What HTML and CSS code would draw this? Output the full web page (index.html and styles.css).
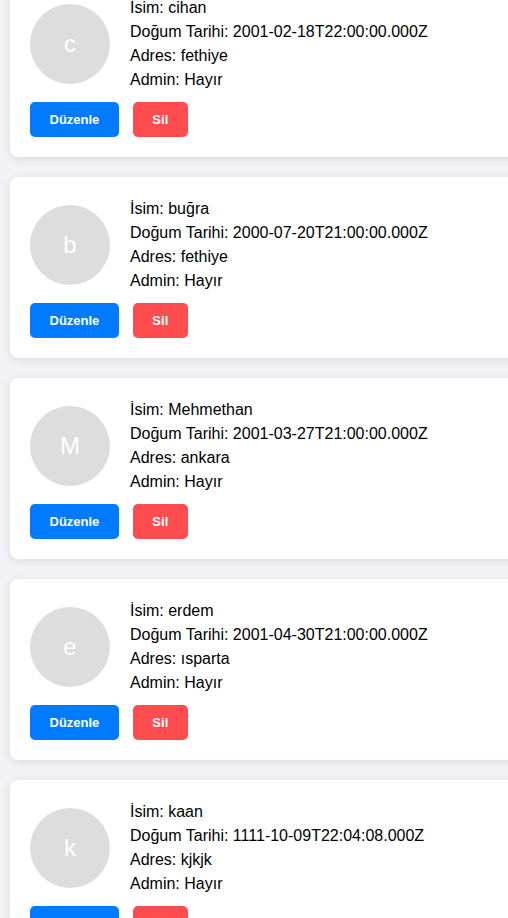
FILE: index.html
```html
<!DOCTYPE html>
<html lang="tr">
<head>
<meta charset="utf-8">
<title>Kullanıcılar</title>
<link rel="stylesheet" href="styles.css">
</head>
<body>
<div class="list">
  <div class="card">
    <div class="info">
      <div class="avatar">c</div>
      <div class="details">
        <div>İsim: cihan</div>
        <div>Doğum Tarihi: 2001-02-18T22:00:00.000Z</div>
        <div>Adres: fethiye</div>
        <div>Admin: Hayır</div>
      </div>
    </div>
    <div class="actions">
      <button class="btn edit">Düzenle</button>
      <button class="btn del">Sil</button>
    </div>
  </div>
  <div class="card">
    <div class="info">
      <div class="avatar">b</div>
      <div class="details">
        <div>İsim: buğra</div>
        <div>Doğum Tarihi: 2000-07-20T21:00:00.000Z</div>
        <div>Adres: fethiye</div>
        <div>Admin: Hayır</div>
      </div>
    </div>
    <div class="actions">
      <button class="btn edit">Düzenle</button>
      <button class="btn del">Sil</button>
    </div>
  </div>
  <div class="card">
    <div class="info">
      <div class="avatar">M</div>
      <div class="details">
        <div>İsim: Mehmethan</div>
        <div>Doğum Tarihi: 2001-03-27T21:00:00.000Z</div>
        <div>Adres: ankara</div>
        <div>Admin: Hayır</div>
      </div>
    </div>
    <div class="actions">
      <button class="btn edit">Düzenle</button>
      <button class="btn del">Sil</button>
    </div>
  </div>
  <div class="card">
    <div class="info">
      <div class="avatar">e</div>
      <div class="details">
        <div>İsim: erdem</div>
        <div>Doğum Tarihi: 2001-04-30T21:00:00.000Z</div>
        <div>Adres: ısparta</div>
        <div>Admin: Hayır</div>
      </div>
    </div>
    <div class="actions">
      <button class="btn edit">Düzenle</button>
      <button class="btn del">Sil</button>
    </div>
  </div>
  <div class="card">
    <div class="info">
      <div class="avatar">k</div>
      <div class="details">
        <div>İsim: kaan</div>
        <div>Doğum Tarihi: 1111-10-09T22:04:08.000Z</div>
        <div>Adres: kjkjk</div>
        <div>Admin: Hayır</div>
      </div>
    </div>
    <div class="actions">
      <button class="btn edit">Düzenle</button>
      <button class="btn del">Sil</button>
    </div>
  </div>
</div>
</body>
</html>
```

FILE: styles.css
```css
html, body {
  margin: 0;
  padding: 0;
  overflow: hidden;
  background: #f2f2f7;
}
body {
  font-family: "Liberation Sans", Arial, sans-serif;
  font-size: 16px;
  color: #000;
}
.list {
  margin-top: -24px;
  padding-left: 10px;
  display: flex;
  flex-direction: column;
  gap: 20px;
}
.card {
  width: 620px;
  background: #fff;
  border-radius: 8px;
  box-shadow: 0 2px 10px rgba(0, 0, 0, 0.1);
  padding: 20px;
  box-sizing: border-box;
}
.info {
  display: flex;
  align-items: center;
  gap: 20px;
}
.avatar {
  width: 80px;
  height: 80px;
  border-radius: 50%;
  background: #dddddd;
  color: #fff;
  font-size: 24px;
  display: flex;
  align-items: center;
  justify-content: center;
  flex: none;
}
.details {
  line-height: 24px;
}
.actions {
  display: flex;
  gap: 14px;
  margin-top: 10px;
}
.btn {
  font-family: "Liberation Sans", Arial, sans-serif;
  font-size: 13px;
  font-weight: bold;
  line-height: 15px;
  color: #fff;
  border: none;
  border-radius: 5px;
  padding: 10px 19.5px;
  cursor: pointer;
}
.edit {
  background: #007bff;
}
.del {
  background: #ff4d4f;
}
```
